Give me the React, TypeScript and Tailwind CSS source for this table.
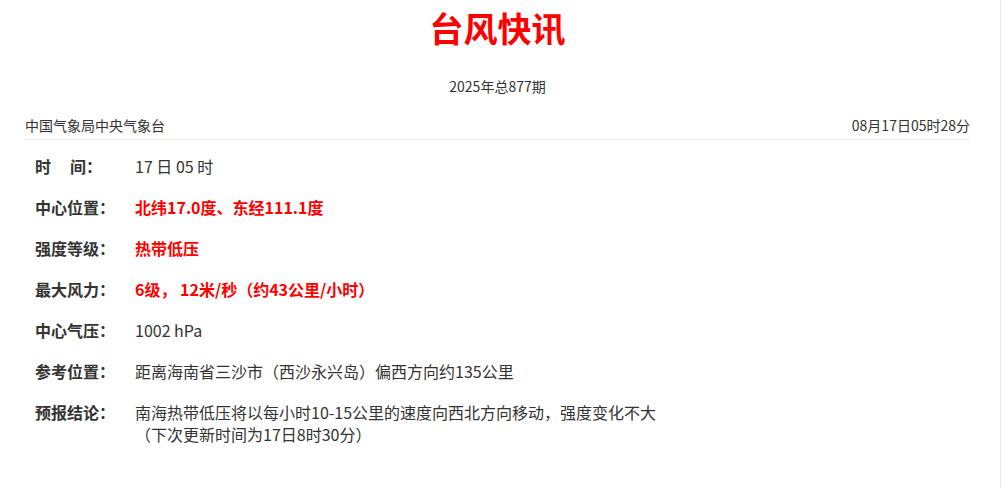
const font = { fontFamily: '"Noto Sans CJK SC", "Noto Sans", sans-serif' };

interface RowProps {
  label: React.ReactNode;
  children: React.ReactNode;
  red?: boolean;
}

const Row = ({ label, children, red }: RowProps) => (
  <div className="flex text-[16px] leading-[22px]">
    <div className="w-[110px] shrink-0 pl-[10px] font-bold text-[#333]">{label}</div>
    <div className={red ? 'font-bold text-[#ff0000]' : 'text-[#333]'}>{children}</div>
  </div>
);

export default function App() {
  return (
    <div className="w-[1001px] min-h-[489px] bg-white border-r border-[#ececec]" style={font}>
      <div className="pl-[25px] pr-[30px]">
        <h1 className="pt-[8px] text-center text-[34px] leading-[40px] font-bold text-[#ff0000]">台风快讯</h1>
        <p className="mt-[28px] text-center text-[14px] leading-[20px] text-[#333]">2025年总877期</p>

        <div className="mt-[19px] flex justify-between border-b border-[#eeeeee] pb-[4px] text-[14px] leading-[20px] text-[#333]">
          <span>中国气象局中央气象台</span>
          <span>08月17日05时28分</span>
        </div>

        <div className="mt-[15px] flex flex-col gap-[19px]">
          <Row label={<>时<span className="inline-block w-[19px]" />间：</>}>17 日 05 时</Row>
          <Row label="中心位置：" red>北纬17.0度、东经111.1度</Row>
          <Row label="强度等级：" red>热带低压</Row>
          <Row label="最大风力：" red>6级， 12米/秒（约43公里/小时）</Row>
          <Row label="中心气压：">1002 hPa</Row>
          <Row label="参考位置：">距离海南省三沙市（西沙永兴岛）偏西方向约135公里</Row>
          <Row label="预报结论：">
            南海热带低压将以每小时10-15公里的速度向西北方向移动，强度变化不大
            <br />
            （下次更新时间为17日8时30分）
          </Row>
        </div>
      </div>
    </div>
  );
}
